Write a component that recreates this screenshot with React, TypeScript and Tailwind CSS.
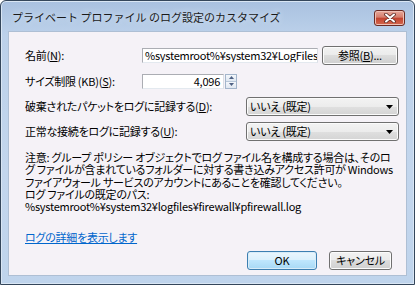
import React from 'react'

const font = "font-['Noto_Sans_CJK_JP','Noto_Sans_CJK_SC',sans-serif]"

function Arrow() {
  return (
    <svg width="7" height="4" viewBox="0 0 7 4" className="ml-auto mr-[5px]">
      <path d="M0 0h7L3.5 4z" fill="#000" />
    </svg>
  )
}

function Select({ value }: { value: string }) {
  return (
    <div className="flex h-[19px] w-[153px] shrink-0 items-center rounded-[3px] border border-[#707070] bg-[linear-gradient(#f3f3f3,#ececec_50%,#e0e0e0_50%,#d4d4d4)] pl-[3px] shadow-[inset_0_0_0_1px_#fbfbfb]">
      <span className="leading-none">{value}</span>
      <Arrow />
    </div>
  )
}

function Button({ label, primary, width }: { label: React.ReactNode; primary?: boolean; width: string }) {
  return (
    <button
      className={`flex h-[19px] shrink-0 ${width} items-center justify-center rounded-[3px] border leading-none ${
        primary
          ? 'border-[#3c7fb1] bg-[linear-gradient(#eaf6fd,#d9f0fc_50%,#bee6fd_50%,#a7d9f5)] shadow-[inset_0_0_0_1px_#d8ecf8]'
          : 'border-[#707070] bg-[linear-gradient(#f2f2f2,#ebebeb_50%,#dddddd_50%,#cfcfcf)] shadow-[inset_0_0_0_1px_#fcfcfc]'
      }`}
    >
      {label}
    </button>
  )
}

function Spinner() {
  return (
    <div className="ml-[1px] flex h-[15px] w-[12px] shrink-0 flex-col border border-[#a3b5cb] bg-[#e8eef6]">
      <div className="flex flex-1 items-center justify-center border-b border-[#b8c7d9] bg-[linear-gradient(#f4f7fb,#dfe7f1)]">
        <svg width="5" height="3" viewBox="0 0 5 3"><path d="M0 3h5L2.5 0z" fill="#4e6184" /></svg>
      </div>
      <div className="flex flex-1 items-center justify-center bg-[linear-gradient(#f4f7fb,#dfe7f1)]">
        <svg width="5" height="3" viewBox="0 0 5 3"><path d="M0 0h5L2.5 3z" fill="#4e6184" /></svg>
      </div>
    </div>
  )
}

export default function App() {
  return (
    <div className={`${font} text-[11px] text-black`}>
      <div className="flex h-[285px] w-[415px] flex-col rounded-t-[6px] border border-[#34465b] bg-[linear-gradient(180deg,#a9c1e0,#bcd1ea_12%,#c3d6ed_60%,#bfd4ec)] shadow-[inset_0_0_0_1px_#d9e6f4]">
        {/* Title bar */}
        <div className="flex h-[30px] items-start">
          <span className="mt-[8px] pl-[11px] text-[11px] leading-[16px] text-[#1a1a1a] [text-shadow:0_0_6px_#e6eef8]">
            プライベート プロファイル のログ設定のカスタマイズ
          </span>
          <div className="ml-auto mr-[9px] mt-[9px] flex h-[16px] w-[31px] items-center justify-center rounded-[3px] border border-[#6b2b24] bg-[linear-gradient(#e8a89b,#d57d6c_45%,#c2432f_50%,#d4684f)] shadow-[inset_0_0_0_1px_#eec0b5]">
            <svg width="12" height="10" viewBox="0 0 12 10">
              <path d="M2 1.5l8 7M10 1.5l-8 7" stroke="#5a2a24" strokeWidth="3.6" strokeLinecap="round" />
              <path d="M2 1.5l8 7M10 1.5l-8 7" stroke="#fff" strokeWidth="2" strokeLinecap="round" />
            </svg>
          </div>
        </div>

        {/* Content */}
        <div className="mx-[7px] mb-[8px] flex flex-1 flex-col border border-[#aebfd4] bg-[#f5f2f7] pl-[16px] pr-[8px] tracking-[-0.25px] [font-feature-settings:'palt']">
          <div className="mt-[14px] flex h-[18px] items-center">
            <span className="w-[117px] shrink-0">
              名前(<span className="underline">N</span>):
            </span>
            <div className="h-[15px] w-[176px] shrink-0 overflow-hidden whitespace-nowrap border border-[#abadb3] border-b-[#e3e9ef] border-r-[#dbdfe6] bg-white pl-[2px] leading-[13px]">
              %systemroot%¥system32¥LogFiles
            </div>
            <div className="ml-[4px]">
              <Button width="w-[76px]" label={<>参照(<span className="underline">B</span>)...</>} />
            </div>
          </div>

          <div className="mt-[8px] flex h-[18px] items-center">
            <span className="w-[117px] shrink-0">
              サイズ制限 (KB)(<span className="underline">S</span>):
            </span>
            <div className="flex h-[15px] w-[82px] shrink-0 items-center justify-end border border-[#abadb3] border-b-[#e3e9ef] border-r-[#dbdfe6] bg-white pr-[3px] leading-none">
              4,096
            </div>
            <Spinner />
          </div>

          <div className="mt-[7px] flex h-[19px] items-center">
            <span className="w-[221px] shrink-0">
              破棄されたパケットをログに記録する(<span className="underline">D</span>):
            </span>
            <Select value="いいえ (既定)" />
          </div>

          <div className="mt-[6px] flex h-[19px] items-center">
            <span className="w-[221px] shrink-0">
              正常な接続をログに記録する(<span className="underline">U</span>):
            </span>
            <Select value="いいえ (既定)" />
          </div>

          <p className="mt-[10px] whitespace-nowrap leading-[12.3px]">
            注意: グループ ポリシー オブジェクトでログ ファイル名を構成する場合は、そのロ
            <br />
            グ ファイルが含まれているフォルダーに対する書き込みアクセス許可が Windows
            <br />
            ファイアウォール サービスのアカウントにあることを確認してください。
            <br />
            ログ ファイルの既定のパス:
            <br />
            %systemroot%¥system32¥logfiles¥firewall¥pfirewall.log
          </p>

          <a className="mt-[19px] w-fit leading-[13px] text-[#0066cc] underline">ログの詳細を表示します</a>

          <div className="mt-[7px] flex gap-[12px] pl-[222px]">
            <Button primary width="w-[70px]" label="OK" />
            <Button width="w-[63px]" label="キャンセル" />
          </div>
        </div>
      </div>
    </div>
  )
}
